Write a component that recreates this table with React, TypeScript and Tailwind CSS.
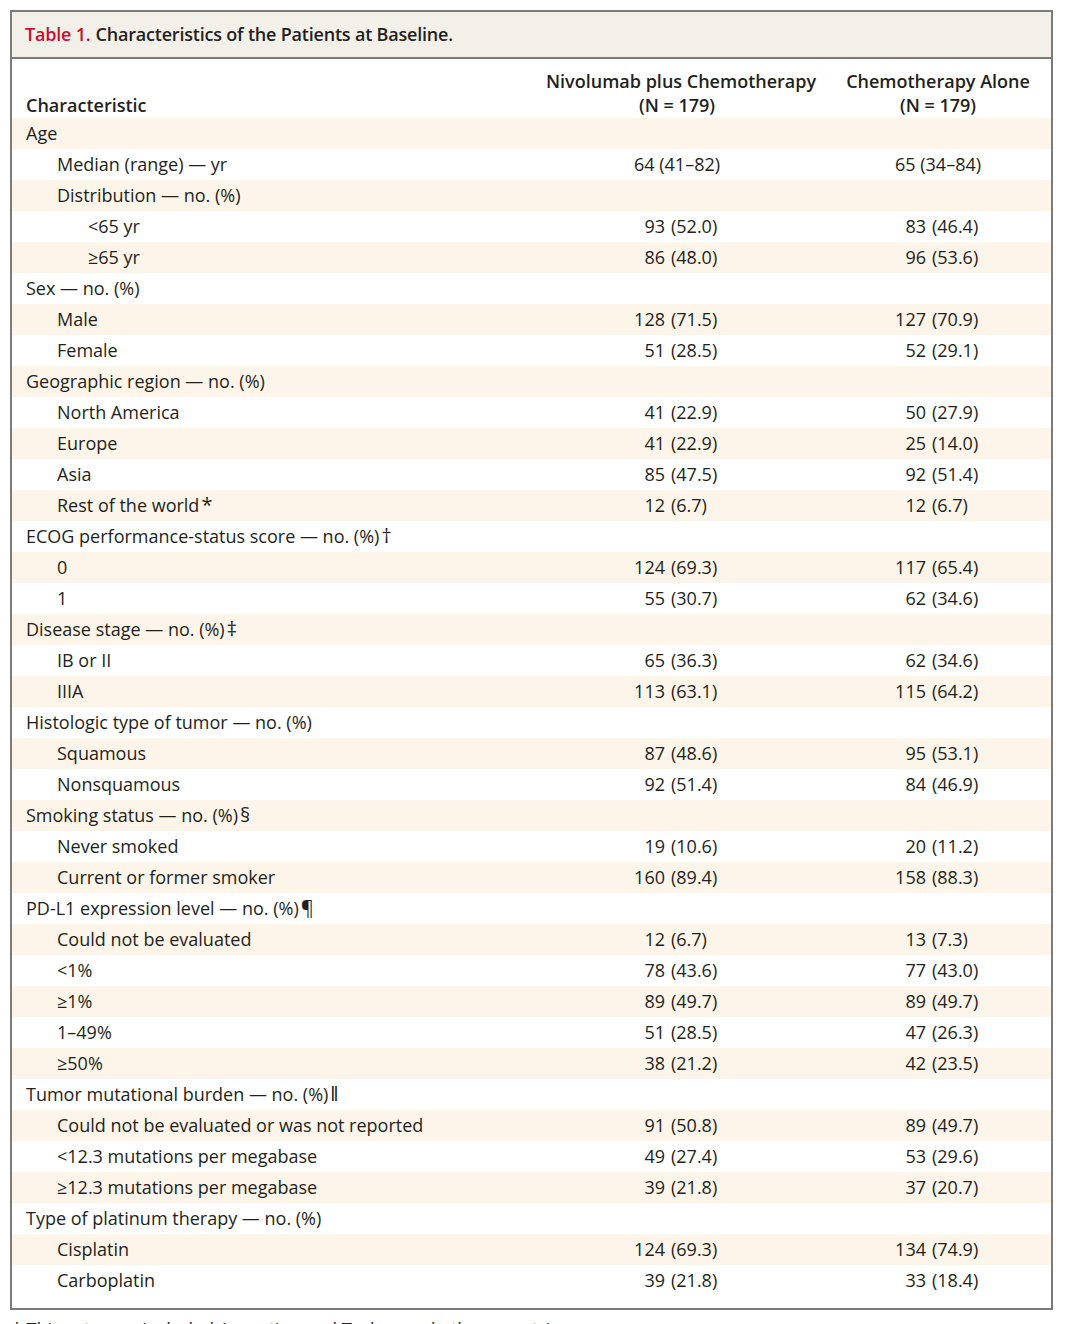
type Row = {
  label: string;
  level: 0 | 1 | 2;
  mark?: string;
  a?: [string, string];
  b?: [string, string];
  center?: boolean;
};

const ROWS: Row[] = [
  { label: "Age", level: 0 },
  { label: "Median (range) — yr", level: 1, a: ["64", "(41–82)"], b: ["65", "(34–84)"], center: true },
  { label: "Distribution — no. (%)", level: 1 },
  { label: "<65 yr", level: 2, a: ["93", "(52.0)"], b: ["83", "(46.4)"] },
  { label: "≥65 yr", level: 2, a: ["86", "(48.0)"], b: ["96", "(53.6)"] },
  { label: "Sex — no. (%)", level: 0 },
  { label: "Male", level: 1, a: ["128", "(71.5)"], b: ["127", "(70.9)"] },
  { label: "Female", level: 1, a: ["51", "(28.5)"], b: ["52", "(29.1)"] },
  { label: "Geographic region — no. (%)", level: 0 },
  { label: "North America", level: 1, a: ["41", "(22.9)"], b: ["50", "(27.9)"] },
  { label: "Europe", level: 1, a: ["41", "(22.9)"], b: ["25", "(14.0)"] },
  { label: "Asia", level: 1, a: ["85", "(47.5)"], b: ["92", "(51.4)"] },
  { label: "Rest of the world", mark: "*", level: 1, a: ["12", "(6.7)"], b: ["12", "(6.7)"] },
  { label: "ECOG performance-status score — no. (%)", mark: "†", level: 0 },
  { label: "0", level: 1, a: ["124", "(69.3)"], b: ["117", "(65.4)"] },
  { label: "1", level: 1, a: ["55", "(30.7)"], b: ["62", "(34.6)"] },
  { label: "Disease stage — no. (%)", mark: "‡", level: 0 },
  { label: "IB or II", level: 1, a: ["65", "(36.3)"], b: ["62", "(34.6)"] },
  { label: "IIIA", level: 1, a: ["113", "(63.1)"], b: ["115", "(64.2)"] },
  { label: "Histologic type of tumor — no. (%)", level: 0 },
  { label: "Squamous", level: 1, a: ["87", "(48.6)"], b: ["95", "(53.1)"] },
  { label: "Nonsquamous", level: 1, a: ["92", "(51.4)"], b: ["84", "(46.9)"] },
  { label: "Smoking status — no. (%)", mark: "§", level: 0 },
  { label: "Never smoked", level: 1, a: ["19", "(10.6)"], b: ["20", "(11.2)"] },
  { label: "Current or former smoker", level: 1, a: ["160", "(89.4)"], b: ["158", "(88.3)"] },
  { label: "PD-L1 expression level — no. (%)", mark: "¶", level: 0 },
  { label: "Could not be evaluated", level: 1, a: ["12", "(6.7)"], b: ["13", "(7.3)"] },
  { label: "<1%", level: 1, a: ["78", "(43.6)"], b: ["77", "(43.0)"] },
  { label: "≥1%", level: 1, a: ["89", "(49.7)"], b: ["89", "(49.7)"] },
  { label: "1–49%", level: 1, a: ["51", "(28.5)"], b: ["47", "(26.3)"] },
  { label: "≥50%", level: 1, a: ["38", "(21.2)"], b: ["42", "(23.5)"] },
  { label: "Tumor mutational burden — no. (%)", mark: "‖", level: 0 },
  { label: "Could not be evaluated or was not reported", level: 1, a: ["91", "(50.8)"], b: ["89", "(49.7)"] },
  { label: "<12.3 mutations per megabase", level: 1, a: ["49", "(27.4)"], b: ["53", "(29.6)"] },
  { label: "≥12.3 mutations per megabase", level: 1, a: ["39", "(21.8)"], b: ["37", "(20.7)"] },
  { label: "Type of platinum therapy — no. (%)", level: 0 },
  { label: "Cisplatin", level: 1, a: ["124", "(69.3)"], b: ["134", "(74.9)"] },
  { label: "Carboplatin", level: 1, a: ["39", "(21.8)"], b: ["33", "(18.4)"] },
];

const indent = ["pl-[14px]", "pl-[45px]", "pl-[76px]"];

// counts right-aligned on a fixed edge, percentages hang after
function Value({ v, center, pad }: { v?: [string, string]; center?: boolean; pad?: boolean }) {
  if (!v) return null;
  if (center)
    return (
      <div className={`text-center ${pad ? "pl-[17px]" : ""}`}>
        {v[0]} {v[1]}
      </div>
    );
  return (
    <div className="flex">
      <span className={`text-right ${pad ? "w-[118px]" : "w-[119px]"}`}>{v[0]}</span>
      <span className="pl-[6px]">{v[1]}</span>
    </div>
  );
}

export default function App() {
  return (
    <div className="min-h-[1324px] bg-white pt-[10px] pl-[10px] font-['Open_Sans',sans-serif] text-[18px] text-[#231f20]">
      <div className="w-[1043px] border-2 border-[#7b7b7b]">
        <div className="flex h-[47px] items-center border-b-2 border-[#7b7b7b] bg-[#f3f0ea] px-[13px] text-[18px] font-semibold tracking-[-0.2px]">
          <span className="text-[#c8102e]">Table 1.</span>
          <span className="ml-[5px]">Characteristics of the Patients at Baseline.</span>
        </div>
        <div className="flex h-[59px] pt-[10px] font-semibold leading-[24px] whitespace-nowrap">
          <div className="flex flex-1 items-end pb-[1px] pl-[14px]">Characteristic</div>
          <div className="w-[262px] text-center">
            Nivolumab plus Chemotherapy
            <br />
            (N = 179)
          </div>
          <div className="w-[243px] pl-[17px] text-center">
            Chemotherapy Alone
            <br />
            (N = 179)
          </div>
        </div>
        <div className="pb-[12px]">
          {ROWS.map((r, i) => (
            <div
              key={i}
              className={`flex h-[31px] items-center leading-[31px] ${i % 2 === 0 ? "bg-[#fdf5e9]" : "bg-white"}`}
            >
              <div className={`flex-1 ${indent[r.level]}`}>
                {r.label}
                {r.mark ? <span className="ml-[2px] text-[20px] leading-none">{r.mark}</span> : null}
              </div>
              <div className="w-[262px]">
                <Value v={r.a} center={r.center} />
              </div>
              <div className="w-[243px]">
                <Value v={r.b} center={r.center} pad />
              </div>
            </div>
          ))}
        </div>
      </div>
      <div className="mt-[7px] pl-[2px] leading-[24px]">
        * This category included Argentina and Turkey and other countries.
      </div>
    </div>
  );
}
